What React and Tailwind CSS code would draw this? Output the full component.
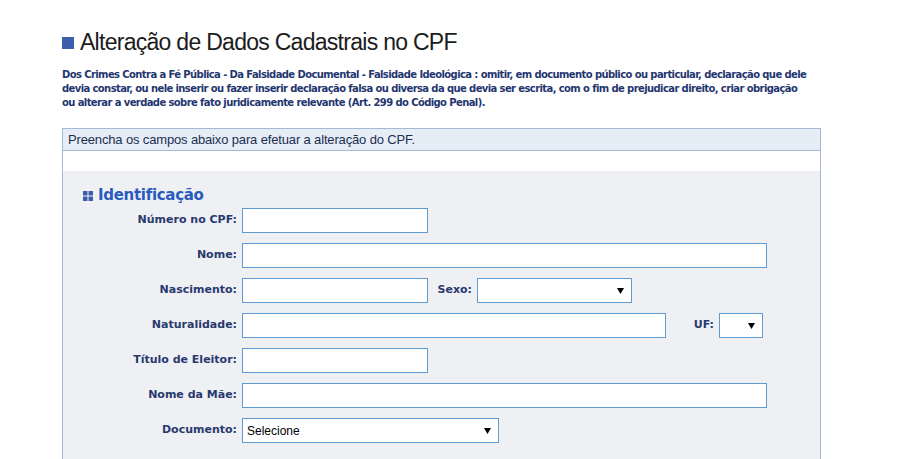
import React from 'react';

const labelFont = { fontFamily: '"DejaVu Sans", Verdana, sans-serif' };

const Arrow = () => (
    <svg width="7" height="6" viewBox="0 0 7 6" className="shrink-0">
        <polygon points="0,0 7,0 3.5,6" fill="#000" />
    </svg>
);

const Input = ({ w }) => (
    <div className={`h-[25px] ${w} border border-[#5d9bd1] bg-white`} />
);

const Select = ({ w, text }) => (
    <div className={`h-[25px] ${w} border border-[#5d9bd1] bg-white flex items-center justify-between pl-[4px] pr-[7px]`}>
        <span className="text-[12px] text-black font-['Liberation_Sans',Arial,sans-serif]">{text}</span>
        <Arrow />
    </div>
);

const Label = ({ children, w = 'w-[175px]' }) => (
    <div className={`${w} shrink-0 text-right text-[11px] font-bold text-[#283a6e] pr-[1px]`} style={labelFont}>
        {children}
    </div>
);

const Row = ({ children }) => (
    <div className="flex items-center h-[25px]">{children}</div>
);

const App = () => {
    return (
        <div className="min-h-screen bg-white pl-[62px] pt-[28px] overflow-hidden">
            {/* Page title */}
            <h1 className="flex items-center h-[28px]">
                <span className="w-[12px] h-[12px] bg-[#3d5fab] mt-[1px]"></span>
                <span className="ml-[6px] text-[23px] text-[#1c1c1c] tracking-[-0.72px] font-['Liberation_Sans',Arial,sans-serif]">
                    Alteração de Dados Cadastrais no CPF
                </span>
            </h1>

            <p className="mt-[12px] text-[10px] leading-[14px] font-bold text-[#1f3670] whitespace-nowrap tracking-[-0.6px]" style={labelFont}>
                Dos Crimes Contra a Fé Pública - Da Falsidade Documental - Falsidade Ideológica : omitir, em documento público ou particular, declaração que dele<br />
                devia constar, ou nele inserir ou fazer inserir declaração falsa ou diversa da que devia ser escrita, com o fim de prejudicar direito, criar obrigação<br />
                ou alterar a verdade sobre fato juridicamente relevante (Art. 299 do Código Penal).
            </p>

            {/* Form box */}
            <div className="mt-[18px] w-[759px] border-x border-t border-[#a5b9d4] min-h-[340px] flex flex-col">
                <div className="h-[22px] bg-[#e5eef7] border-b border-[#a5b9d4] flex items-center pl-[5px] text-[13px] tracking-[-0.15px] text-[#1d2d4f] font-['Liberation_Sans',Arial,sans-serif]">
                    Preencha os campos abaixo para efetuar a alteração do CPF.
                </div>
                <div className="h-[20px] bg-white"></div>
                <div className="flex-1 bg-[#eff0f4] pt-[14px] pb-[20px]">
                    <div className="flex items-center h-[20px] pl-[20px]">
                        <svg width="10" height="10" viewBox="0 0 10 10" className="mt-[1px]">
                            <rect x="0" y="0" width="4.5" height="4.5" fill="#3d5fab" />
                            <rect x="5.5" y="0" width="4.5" height="4.5" fill="#3d5fab" />
                            <rect x="0" y="5.5" width="4.5" height="4.5" fill="#3d5fab" />
                            <rect x="5.5" y="5.5" width="4.5" height="4.5" fill="#3d5fab" />
                        </svg>
                        <span className="ml-[5px] text-[15px] font-bold text-[#2a5bbf] tracking-[-0.3px]" style={labelFont}>
                            Identificação
                        </span>
                    </div>

                    <div className="mt-[3px] flex flex-col gap-[10px]">
                        <Row>
                            <Label>Número no CPF:</Label>
                            <div className="ml-[4px]"><Input w="w-[186px]" /></div>
                        </Row>
                        <Row>
                            <Label>Nome:</Label>
                            <div className="ml-[4px]"><Input w="w-[525px]" /></div>
                        </Row>
                        <Row>
                            <Label>Nascimento:</Label>
                            <div className="ml-[4px]"><Input w="w-[186px]" /></div>
                            <Label w="w-[45px]">Sexo:</Label>
                            <div className="ml-[4px]"><Select w="w-[155px]" text="" /></div>
                        </Row>
                        <Row>
                            <Label>Naturalidade:</Label>
                            <div className="ml-[4px]"><Input w="w-[424px]" /></div>
                            <Label w="w-[49px]">UF:</Label>
                            <div className="ml-[4px]"><Select w="w-[44px]" text="" /></div>
                        </Row>
                        <Row>
                            <Label>Título de Eleitor:</Label>
                            <div className="ml-[4px]"><Input w="w-[186px]" /></div>
                        </Row>
                        <Row>
                            <Label>Nome da Mãe:</Label>
                            <div className="ml-[4px]"><Input w="w-[525px]" /></div>
                        </Row>
                        <Row>
                            <Label>Documento:</Label>
                            <div className="ml-[4px]"><Select w="w-[257px]" text="Selecione" /></div>
                        </Row>
                    </div>
                </div>
            </div>
        </div>
    );
};

export default App;
